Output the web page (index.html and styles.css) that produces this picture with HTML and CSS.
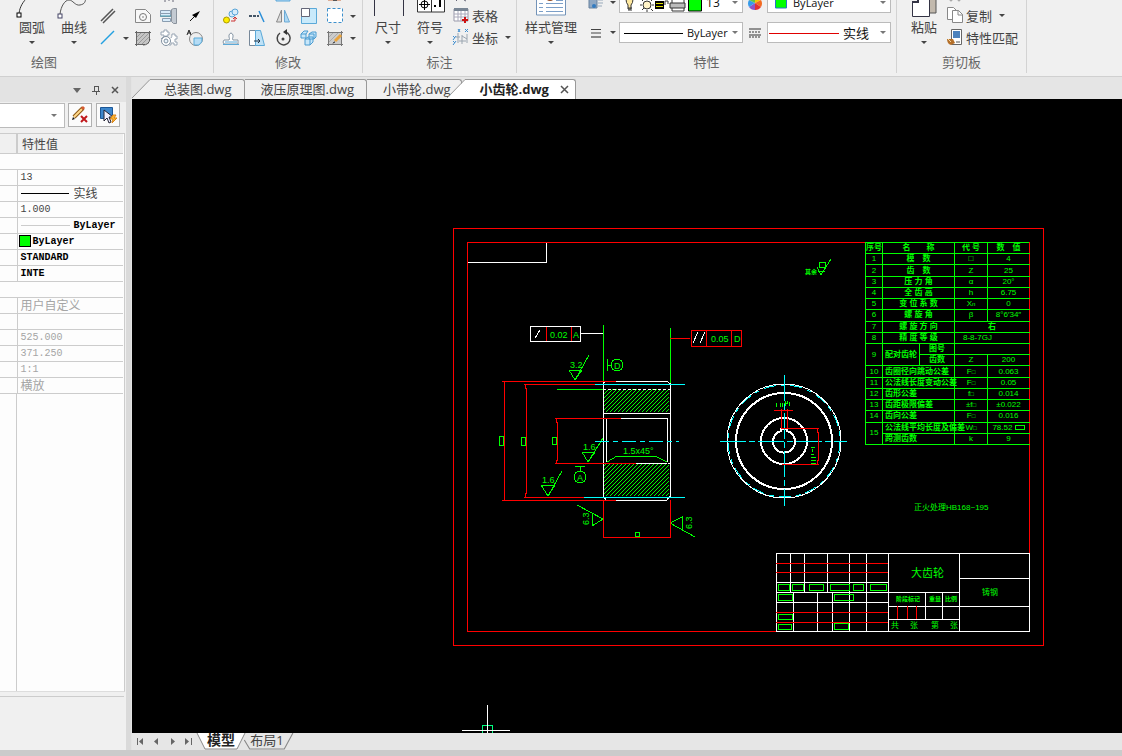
FILE: index.html
```html
<!DOCTYPE html>
<html lang="zh-CN">
<head>
<meta charset="UTF-8">
<title>小齿轮.dwg</title>
<link rel="stylesheet" href="styles.css">
</head>
<body>
<header class="ribbon">
  <section class="group group-draw">
    <div class="tools">
      <button class="big first">
        <svg class="big-icon" width="42" height="20" viewBox="11 0 42 20"><path d="M19 15C19 9 22 3 26 -1" fill="none" stroke="#333" stroke-width="1"/><rect x="17" y="13" width="4" height="4" fill="#fff" stroke="#000"/></svg>
        <span>圆弧</span><i class="arrow"></i>
      </button>
      <button class="big">
        <svg class="big-icon" width="42" height="20" viewBox="53 0 42 20"><path d="M60 14C61 6 65 0 69 0S75 6 80 5S85 2 86 -2" fill="none" stroke="#555"/><rect x="58" y="14" width="4" height="4" fill="#fff" stroke="#446"/></svg>
        <span>曲线</span><i class="arrow"></i>
      </button>
      <div class="grid grid-draw">
        <span></span><span></span><span></span>
        <button class="tool" aria-label="中心线"><svg class="icon" viewBox="0 0 20 20"><path d="M5 17h2M10 16v1M13 17h2" stroke="#667" fill="none"/></svg></button>
        <span></span>
        <button class="tool" aria-label="平行线"><svg class="icon" viewBox="0 0 20 20"><path d="M3 15L15 3M5 17L17 5" stroke="#555" stroke-width="1.5"/></svg></button>
        <span></span>
        <button class="tool" aria-label="局部放大"><svg class="icon" viewBox="0 0 20 20"><path d="M2.500 3.500h10l5 5v8h-15z" fill="#f8f8f8" stroke="#888"/><circle cx="10" cy="11" r="3.500" fill="none" stroke="#777"/><circle cx="10" cy="11" r="1" fill="#aaa"/></svg></button>
        <button class="tool" aria-label="轴"><svg class="icon" viewBox="0 0 20 20"><path d="M1.500 4.500h10v3h-10zM1.500 7.500h10v3h-10zM3.500 12.500h8v3h-8z" fill="#d9ecfa" stroke="#8a9db0"/><path d="M12.500 3.500l2-1h3v15h-3l-2-2z" fill="#c3cad2" stroke="#8a929c"/><path d="M1 10h11" stroke="#49a"/></svg></button>
        <button class="tool" aria-label="箭头"><svg class="icon" viewBox="0 0 20 20"><path d="M5 15L10 10" stroke="#111"/><path d="M15 5L7 9l4 3z" fill="#000"/></svg></button>
        <button class="tool" aria-label="直线"><svg class="icon" viewBox="0 0 20 20"><path d="M3 16L16 3" stroke="#23a0e0" stroke-width="1.500"/></svg></button>
        <i class="arrow"></i>
        <button class="tool" aria-label="剖面线"><svg class="icon" viewBox="0 0 20 20"><path d="M4 5h12v11H4z" fill="#c5c5c5"/><path d="M4 9l4-4M4 13l8-8M5 16L16 5M9 16l7-7" fill="none" stroke="#999"/><path d="M2 4.500h16M2 16.500h10M3.500 3v15M16.500 3v9" stroke="#666"/><path d="M10 17q6 0 7-6" fill="none" stroke="#555"/></svg></button>
        <button class="tool" aria-label="齿形"><svg class="icon" viewBox="0 0 20 20"><path d="M2 4h3V2h3v2h2v3H8v2H5V7H2zM13 6h3v2h2v3h-2v3h2v3h-3v-2h-3v2h-2M2 11q2-3 5-3M12 10q1-1 1-4" fill="#fff" stroke="#98a5b3"/><circle cx="7" cy="13" r="4.500" fill="#fff" stroke="#8090a0"/><circle cx="7" cy="13" r="2" fill="#e8f2fa" stroke="#8090a0"/></svg></button>
        <button class="tool" aria-label="局部视图"><svg class="icon" viewBox="0 0 20 20"><circle cx="11" cy="11" r="6.500" fill="#eee" stroke="#888"/><path d="M9 10h8q1 4-3 7l-5 0z" fill="#b5dcf5" stroke="#5aabda"/><path d="M2 7l2-5 2 5M3 5h3" fill="none" stroke="#222"/></svg></button>
      </div>
    </div>
    <h2>绘图</h2>
  </section>
  <section class="group group-edit">
    <div class="tools">
      <div class="grid grid-edit">
        <span></span><span></span>
        <button class="tool" aria-label="拉伸"><svg class="icon" viewBox="0 0 20 20"><path d="M3 14h14v3H3z" fill="#b5dcf5" stroke="#59a5d8"/></svg></button>
        <span></span>
        <button class="tool" aria-label="删除"><svg class="icon" viewBox="0 0 20 20"><path d="M3 16h13" stroke="#c96a3a"/><path d="M8 16h4v1H8z" fill="#555"/></svg></button>
        <span></span>
        <button class="tool" aria-label="平移复制"><svg class="icon" viewBox="0 0 20 20"><circle cx="11" cy="8" r="3" fill="#d5ebfa" stroke="#59a5d8"/><circle cx="14" cy="6" r="3" fill="#d5ebfa" stroke="#59a5d8"/><circle cx="5.500" cy="14" r="3" fill="#fe0" stroke="#a90"/><path d="M10 15h4v-3M12 13l2-2 2 2" fill="none" stroke="#c33"/></svg></button>
        <button class="tool" aria-label="裁剪"><svg class="icon" viewBox="0 0 20 20"><path d="M2 10h10" stroke="#456" stroke-width="2" stroke-dasharray="3 1"/><path d="M12 5l5 11" stroke="#2b8fd8" stroke-width="1.500"/></svg></button>
        <button class="tool" aria-label="镜像"><svg class="icon" viewBox="0 0 20 20"><path d="M8.500 4v12h-5z" fill="#ddd" stroke="#888"/><path d="M11.500 4v12h5z" fill="#aed8f3" stroke="#6ba9d4"/></svg></button>
        <button class="tool" aria-label="缩放"><svg class="icon" viewBox="0 0 20 20"><path d="M2.500 2.500h15v15h-15z" fill="#c9eafb" stroke="#5ba9d8"/><path d="M2.500 2.500h8v8h-8z" fill="#fff" stroke="#667"/></svg></button>
        <button class="tool" aria-label="选择"><svg class="icon" viewBox="0 0 20 20"><path d="M2.500 2.500h15v14h-15z" fill="#fff" stroke="#3d90cc" stroke-dasharray="3 2"/></svg></button>
        <i class="arrow"></i>
        <button class="tool" aria-label="等距线"><svg class="icon" viewBox="0 0 20 20"><path d="M3 12h5q1-1 0-3V7q2-4 4 0v2q-1 2 0 3h5v4H3q-2-2 0-4" fill="#fff" stroke="#8796a5"/><path d="M2 16.500h16M4 14h12" fill="none" stroke="#5ba9d8"/></svg></button>
        <button class="tool" aria-label="延伸"><svg class="icon" viewBox="0 0 20 20"><path d="M2.500 2.500h6v15h-6z" fill="#fff" stroke="#789"/><path d="M8.500 2.500h5l4 15h-9z" fill="#bfe2f7" stroke="#5ba9d8"/><path d="M7 13h6M11 11l2 2-2 2" fill="none" stroke="#234"/></svg></button>
        <button class="tool" aria-label="旋转"><svg class="icon" viewBox="0 0 20 20"><path d="M7 5a6.500 6.500 0 1 0 5-1" fill="none" stroke="#444" stroke-width="1.500"/><path d="M14 1l-4 3 4 3z" fill="#333"/><circle cx="10" cy="11" r="1.500" fill="#444"/></svg></button>
        <button class="tool" aria-label="阵列"><svg class="icon" viewBox="0 0 20 20"><path d="M2 6l3-3h4l-2 3v4H2zM10 6l3-2h4v5l-2 2h-5zM6 11l3-2h5v5l-3 3H6zM6 11h5v6M2 6h5M10 6h5v5" fill="#c8e7fa" stroke="#4b9bd0"/></svg></button>
        <button class="tool" aria-label="编辑填充"><svg class="icon" viewBox="0 0 20 20"><path d="M3 4h14v12H3z" fill="#ccc"/><path d="M4 9l5-5M4 14L14 4M7 16l9-9" stroke="#aaa"/><path d="M2 4.500h16M2 16.500h16M3.500 3v15M16.500 3v15" stroke="#777"/><path d="M10 13l6-6" stroke="#e8a33d" stroke-width="3"/><path d="M8 15l2-1" stroke="#333"/></svg></button>
        <i class="arrow"></i>
      </div>
    </div>
    <h2>修改</h2>
  </section>
  <section class="group group-dim">
    <div class="tools">
      <button class="big">
        <svg class="big-icon" width="42" height="20" viewBox="368 0 42 20"><path d="M375.500 -1v17M404.500 -1v17" stroke="#334"/></svg>
        <span>尺寸</span><i class="arrow"></i>
      </button>
      <button class="big">
        <svg class="big-icon" width="42" height="20" viewBox="410 0 42 20"><path d="M418.500 -2h27v14h-27zM432.500 -2v14" fill="#fff" stroke="#333"/><circle cx="425.500" cy="4.500" r="3.500" fill="none" stroke="#000"/><path d="M420 4.500h11M425.500 -2v12" stroke="#000"/><path d="M435 5h2v2h-2zM440 0h2v7h-2z"/></svg>
        <span>符号</span><i class="arrow"></i>
      </button>
      <div class="list">
        <button class="row" aria-label="粗糙度"><svg class="icon" viewBox="0 0 20 20"><path d="M5 18l2-2M13 17l2 1" stroke="#667"/></svg></button>
        <button class="row"><svg class="icon" viewBox="0 0 20 20"><path d="M3 4h14v12H3z" fill="#fff" stroke="#99a"/><path d="M3 3h14v3H3z" fill="#788594"/><path d="M3 9h14M3 12h14M7 6v10M10 6v10M14 6v10" stroke="#aab"/><path d="M14 12v6M11 15h6" stroke="#c11" stroke-width="2"/></svg>表格</button>
        <button class="row"><svg class="icon" viewBox="0 0 20 20"><path d="M7 6v10M5 10h4M11 8v9M8 14h7M16 7v9M11 9l5 3" fill="none" stroke="#9aa5b0"/><path d="M7 2l2 3M9 2L7 5M14 2l3 3M17 2l-3 3M2 9l2 2M5 9l-3 4M2 14l2 2M5 14l-3 4" stroke="#3e8ed0"/></svg>坐标<i class="arrow"></i></button>
      </div>
    </div>
    <h2>标注</h2>
  </section>
  <section class="group group-props">
    <div class="tools">
      <button class="big wide">
        <svg class="big-icon" width="60" height="20" viewBox="523 0 60 20"><path d="M538.500 -3h29v18h-29z" fill="#fff" stroke="#7393b8"/><circle cx="552" cy="-3" r="4" fill="#954b21"/><path d="M541 3.500h4M541 7.500h4M541 11.500h4M558 0.500h7M548 3.500h17M548 7.500h17M548 11.500h17" stroke="#7b9fc8"/></svg>
        <span>样式管理</span><i class="arrow"></i>
      </button>
      <div class="props">
        <div class="prop-line">
          <button class="tool small" aria-label="图层"><svg class="icon" viewBox="0 0 20 20"><path d="M3 6h8v9H3z" fill="#8fa8c4" stroke="#68829e"/><circle cx="8" cy="13" r="2" fill="#337bc0"/><path d="M12 7h5M12 10h5M12 13h4" stroke="#9ab"/></svg></button>
          <i class="arrow"></i>
          <label class="combo">
            <svg width="82" height="19" viewBox="622 -8 82 19"><path d="M628 -2a4 4 0 0 1 7 0q0 4-2 6v4h-3v-4q-2-2-2-6" fill="#ffe9a0" stroke="#333"/><path d="M630 7h4M630 9h4" stroke="#333"/><circle cx="649" cy="4" r="4" fill="#fff3c8" stroke="#333"/><path d="M642 4h2M654 4h2M649 -3v2M649 9v2M644 -1l1 1M653 8l2 2M644 9l2-2M653 0l2-2" stroke="#333"/><path d="M657 0h9v8h-9z"/><path d="M658 2.500h7M658 5.500h7" stroke="#dd0"/><path d="M667 4v-4h3v3" stroke="#333" fill="none"/><path d="M674 -2h12v12h-12z" fill="#fff" stroke="#333"/><path d="M672 2h15v5h-15z" fill="#bbb" stroke="#333"/><path d="M690.500 -2h13v12h-13z" fill="#0f0" stroke="#000"/></svg>
            <select class="select-layer" aria-label="图层"><option>13</option></select><i class="arrow light"></i>
          </label>
          <button class="tool small" aria-label="颜色"><svg class="icon" viewBox="0 0 20 20"><path d="M10 10V3a7 7 0 0 1 6 4z" fill="#f7c600"/><path d="M10 10l6-3a7 7 0 0 1 0 7z" fill="#f36b21"/><path d="M10 10l6 4a7 7 0 0 1-6 3z" fill="#e33030"/><path d="M10 10v7a7 7 0 0 1-6-3z" fill="#8c55c8"/><path d="M10 10l-6 4a7 7 0 0 1 0-7z" fill="#379bea"/><path d="M10 10L4 7a7 7 0 0 1 6-4z" fill="#5ec449"/></svg></button>
          <label class="combo">
            <svg width="25" height="19" viewBox="770 -8 25 19"><path d="M777.500 -3h11v10h-11z" fill="#0f0" stroke="#2874c8"/></svg>
            <select class="select-fill" aria-label="颜色"><option>ByLayer</option></select><i class="arrow light"></i>
          </label>
        </div>
        <div class="prop-line">
          <button class="tool small" aria-label="线宽"><svg class="icon" viewBox="0 0 20 20"><path d="M5 6.500h10M5 10h10" stroke="#444"/><path d="M5 14h10" stroke="#222"/></svg></button>
          <i class="arrow"></i>
          <label class="combo">
            <svg width="67" height="19" viewBox="0 0 67 19"><path d="M4 10h59" stroke="#000" shape-rendering="crispEdges"/></svg>
            <select class="select-fill" aria-label="线宽"><option>ByLayer</option></select><i class="arrow light"></i>
          </label>
          <button class="tool small" aria-label="线型"><svg class="icon" viewBox="0 0 20 20"><path d="M4 6h12M4 12h12" stroke="#333"/><path d="M4 9h12M4 14h12" stroke="#333" stroke-dasharray="2 1"/></svg></button>
          <label class="combo">
            <svg width="75" height="19" viewBox="0 0 75 19"><path d="M1 10h70" stroke="#e00000" shape-rendering="crispEdges"/></svg>
            <select class="select-fill select-han" aria-label="线型"><option>实线</option></select><i class="arrow light"></i>
          </label>
        </div>
      </div>
    </div>
    <h2>特性</h2>
  </section>
  <section class="group group-clip">
    <div class="tools">
      <button class="big">
        <svg class="big-icon" width="42" height="20" viewBox="904 0 42 20"><path d="M929 -2h8v15h-8z" fill="#c2b9ad" stroke="#555"/><path d="M913.500 1.500h6v-3h11v18h-17z" fill="#fff" stroke="#334"/><path d="M913 2h6v-3" fill="none" stroke="#334" stroke-width="2"/></svg>
        <span>粘贴</span><i class="arrow"></i>
      </button>
      <div class="list">
        <button class="row" aria-label="剪切"><svg class="icon" viewBox="0 0 20 20"><path d="M4 16q2 4 4 0M12 16q2 4 4 0" fill="none" stroke="#999"/></svg></button>
        <button class="row"><svg class="icon" viewBox="0 0 20 20"><path d="M2.500 2.500h6l3 3v9h-9z" fill="#fff" stroke="#888"/><path d="M7.500 5.500h6l4 4v8h-10z" fill="#fff" stroke="#888"/><path d="M13 5v5h5" fill="none" stroke="#888"/></svg>复制<i class="arrow"></i></button>
        <button class="row"><svg class="icon" viewBox="0 0 20 20"><path d="M6.500 2.500h10v15h-10z" fill="#fff" stroke="#666"/><path d="M8 4h7v7H8z" fill="#4d82bd"/><path d="M11 15h4" stroke="#555"/><path d="M2 12q4 0 6 0l2 4-4 2q-4-1-4-6" fill="#b5702a"/><path d="M3 12l3 3" stroke="#f4d8a0"/></svg>特性匹配</button>
      </div>
    </div>
    <h2>剪切板</h2>
  </section>
</header>

<div class="workspace">
  <aside class="panel">
    <div class="panel-head">
      <button aria-label="选项"><svg width="10" height="10" viewBox="0 0 10 10"><path d="M1 3h8L5 8z" fill="#666"/></svg></button>
      <button aria-label="固定"><svg width="10" height="10" viewBox="0 0 10 10"><path d="M3 1v5M7 1v5M3 1h4M1 6h8M5 6v4" fill="none" stroke="#555" shape-rendering="crispEdges"/></svg></button>
      <button aria-label="关闭"><svg width="10" height="10" viewBox="0 0 10 10"><path d="M2 2l6 6M8 2L2 8" stroke="#555" stroke-width="1.500"/></svg></button>
    </div>
    <div class="panel-tools">
      <label class="pick"><select aria-label="对象"><option></option></select><i class="arrow light"></i></label>
      <button aria-label="取消选择"><svg width="20" height="20" viewBox="0 0 20 20"><path d="M4 12l9-9" stroke="#8a5714" stroke-width="4"/><path d="M4 12l8-8" stroke="#ffd98a" stroke-width="2"/><path d="M12 4l2-2" stroke="#d65a31" stroke-width="3"/><path d="M2 15l1-3 2 2z" fill="#111"/><path d="M11 11l6 6M17 11l-6 6" stroke="#c0181c" stroke-width="2"/></svg></button>
      <button aria-label="快速选择"><svg width="20" height="20" viewBox="0 0 20 20"><path d="M2.500 2.500h12v11h-12z" fill="#3c86cc" stroke="#1c5797"/><path d="M6 5l0 11 3-3 2 5 2-1-2-5h4z" fill="#eef" stroke="#223"/><path d="M15 10l-3 4h3l-1 4 5-5h-3l2-3z" fill="#ffb82e" stroke="#d9851a"/></svg></button>
    </div>
    <div class="sheet">
      <table class="prop-table">
        <thead><tr><th></th><th>特性值</th></tr></thead>
        <tbody>
          <tr class="cat"><td colspan="2"></td></tr>
          <tr><td></td><td>13</td></tr>
          <tr><td></td><td><span class="flexed"><svg width="49" height="10"><path d="M0 5h48" stroke="#000" shape-rendering="crispEdges"/></svg><span class="han">实线</span></span></td></tr>
          <tr><td></td><td>1.000</td></tr>
          <tr class="strong"><td></td><td><span class="flexed"><svg width="49" height="10"><path d="M0 5h49" stroke="#ccc" shape-rendering="crispEdges"/></svg>ByLayer</span></td></tr>
          <tr class="strong"><td></td><td><span class="flexed swatched"><i class="swatch"></i>ByLayer</span></td></tr>
          <tr class="strong"><td></td><td>STANDARD</td></tr>
          <tr class="strong"><td></td><td>INTE</td></tr>
          <tr class="cat"><td colspan="2"></td></tr>
          <tr class="off"><td></td><td><span class="han">用户自定义</span></td></tr>
          <tr class="off"><td></td><td></td></tr>
          <tr class="off"><td></td><td>525.000</td></tr>
          <tr class="off"><td></td><td>371.250</td></tr>
          <tr class="off"><td></td><td>1:1</td></tr>
          <tr class="off"><td></td><td><span class="han">横放</span></td></tr>
        </tbody>
      </table>
      <div class="sheet-rest"></div>
    </div>
    <div class="hint"></div>
  </aside>

  <main class="documents">
    <nav class="tabs">
      <div class="tab tab-first"><svg width="20" height="20" viewBox="0 0 20 20"><path d="M0 20L18 1h2v19z" fill="#f0f0f0"/><path d="M0 19L18 0.500h2" fill="none" stroke="#999"/></svg><button>总装图.dwg</button></div>
      <div class="tab"><button>液压原理图.dwg</button></div>
      <div class="tab tab-last"><button>小带轮.dwg</button></div>
      <div class="tab active"><svg width="20" height="20" viewBox="0 0 20 20"><path d="M0 20L18 1h2v19z" fill="#fff"/><path d="M0 19L18 0.500h2" fill="none" stroke="#999"/></svg><button>小齿轮.dwg</button><button class="close" aria-label="关闭"><svg width="10" height="10" viewBox="0 0 10 10"><path d="M1 1l7 7M8 1L1 8" stroke="#555" stroke-width="1.500"/></svg></button></div>
    </nav>
    <div class="canvas">
      <svg class="drawing" width="990" height="634" viewBox="133 100 990 634">
        <defs>
          <pattern id="hatch" width="4" height="4" patternUnits="userSpaceOnUse"><path d="M-1 5L5 -1M-1 1L1 -1M3 5L5 3" stroke="#00ff00" stroke-width="1"/></pattern>
        </defs>
        <!-- sheet frame -->
        <path class="red" d="M454 229H1044V646H454zM468 243H1030V632H468z"/>
        <path class="white" d="M469 263H547V244"/>

        <!-- half section of the gear -->
        <rect x="604" y="390" width="66" height="23" fill="url(#hatch)"/>
        <rect x="604" y="464" width="66" height="33" fill="url(#hatch)"/>
        <g class="green">
          <path d="M604 326V384M671 329V384M558 390H604"/>
          <path d="M570 371H583L576 381L590 356M570 371L576 381"/>
          <path d="M583 453H596L589 463L604 439M583 453L589 463"/>
          <path d="M542 486H556L549 497L563 472M542 486L549 497"/>
          <path d="M608 463L618 457H656L668 463"/>
          <path d="M608 360V372M608 366H612M576 467H586M581 467V472"/>
          <circle cx="618" cy="366" r="6"/>
          <circle cx="581" cy="478" r="6"/>
          <path d="M578 506L604 520L593 527V514M696 538L671 524L683 518V531"/>
          <path d="M500 437h4v9h-4zM522 438h4v8h-4zM553 438h4v7h-4zM636 533h4v4h-4z"/>
        </g>
        <g class="white">
          <path d="M531 327H581V342H531zM582 334H604M536 339L541 331"/>
          <path d="M694 344L699 333M701 344L706 333"/>
          <path d="M617 382H668M617 501H668M604 414H671M622 419H668M637 464H668"/>
          <path d="M604 384V498M671 384V498M607 419V463M668 419V463"/>
          <path d="M604 384L607 382M668 382L671 385M604 497L607 501M671 497L668 501"/>
          <path d="M604 390H671M604 464H671" stroke-dasharray="3 2"/>
        </g>
        <g class="red">
          <path d="M547 328V342M572 328V342M692 331H742V347H692zM707 331V347M732 331V347M671 339H691"/>
          <path d="M503 382H617M503 501H617M505 382V501"/>
          <path d="M525 385H596M525 498H585M526 385V389H527V494H526V498"/>
          <path d="M556 419H622M556 464H637M557 419V423H558V461H557V464"/>
          <path d="M604 501V539M671 501V539M604 538H671"/>
        </g>
        <path class="cyan" d="M596 385H686M585 498H686"/>
        <path class="cyan" d="M596 442H680" stroke-dasharray="14 4 5 4"/>
        <g class="note">
          <text x="551" y="339">0.02</text><text x="574" y="339">A</text>
          <text x="712" y="343">0.05</text><text x="735" y="343">D</text>
          <text x="571" y="369">3.2</text><text x="584" y="451">1.6</text><text x="543" y="484">1.6</text>
          <text x="615" y="370">D</text><text x="578" y="482">A</text>
          <text x="624" y="455">1.5x45°</text>
          <text transform="translate(590 526) rotate(-90)">6.3</text>
          <text transform="translate(693 530) rotate(-90)">6.3</text>
        </g>

        <!-- end view -->
        <g class="white">
          <circle cx="785" cy="442" r="57"/>
          <circle class="thick" cx="785" cy="442" r="48"/>
          <circle class="thick" cx="785" cy="442" r="23"/>
          <path class="thick" d="M782 432A11 11 0 1 0 788 432V430H782z"/>
        </g>
        <circle class="cyan" cx="785" cy="442" r="56" stroke-dasharray="12 5 5 5"/>
        <path class="cyan" d="M785 376V507M721 442H848" stroke-dasharray="26 3 6 3"/>
        <path class="red" d="M775 411H794M782 410V430M788 410V430M783 429H820M783 465H820M818 429V433H819V461H818V465"/>
        <path class="green" d="M777 404V408M781 404V408M783 404V408M785 404h3M786 402v5M788 402v3M790 403v4M812 448h4M813 453v-3M812 455h3M812 458h5M812 461h5M812 464h5"/>

        <!-- general roughness -->
        <path class="green" d="M820 263h6v5h-6zM818 268L822 276L832 260M819 272H826"/>
        <g class="note tiny"><text x="806" y="275">其余</text></g>
        <g class="note mid"><text x="915" y="511">正火处理HB168~195</text></g>

        <!-- title block -->
        <g class="white">
          <path d="M777 554H1030V632H777zM889 554V632M960 554V632M777 593H960M960 579H1030M889 607H1030M777 583H889M777 603H889M889 620H960"/>
          <path d="M791 554V593M805 554V593M828 554V593M850 554V632M867 554V632M794 593V632M818 593V632M833 593V632M926 593V620M943 593V620"/>
        </g>
        <path class="red" d="M777 564H889M777 573H889M777 613H889M777 623H889M898 607V620M908 607V620M917 607V620"/>
        <path class="green" d="M779 585h11v6h-11zM793 585h11v6h-11zM810 585h14v6h-14zM831 585h19v6h-19zM854 585h10v6h-10zM871 585h16v6h-16zM779 595h14v6h-14zM835 595h19v6h-19zM779 615h14v5h-14zM779 625h13v5h-13zM835 624h14v6h-14z"/>
        <g class="note title"><text x="912" y="578">大齿轮</text></g>
        <g class="note tiny">
          <text x="897" y="602">阶段标记</text><text x="930" y="602">重量</text><text x="946" y="602">比例</text>
        </g>
        <g class="note mid">
          <text x="983" y="596">铸钢</text>
          <text x="892" y="629">共</text><text x="911" y="629">张</text><text x="932" y="629">第</text><text x="951" y="629">张</text>
        </g>

        <!-- cursor -->
        <path d="M483 740V726H493V740" fill="none" stroke="#00ff80"/>
        <path class="white" d="M488 706V734M463 731H511"/>
      </svg>

      <table class="gear-data">
        <colgroup><col class="c-no"><col class="c-name"><col class="c-sub"><col class="c-sym"><col class="c-val"></colgroup>
        <tr><th>序号</th><th colspan="2">名　　称</th><th>代 号</th><th>数　值</th></tr>
        <tr><td>1</td><td colspan="2" class="name">模　数</td><td>□</td><td>4</td></tr>
        <tr><td>2</td><td colspan="2" class="name">齿　数</td><td>Z</td><td>25</td></tr>
        <tr><td>3</td><td colspan="2" class="name">压 力 角</td><td>α</td><td>20°</td></tr>
        <tr><td>4</td><td colspan="2" class="name">全 齿 高</td><td>h</td><td>6.75</td></tr>
        <tr><td>5</td><td colspan="2" class="name">变 位 系 数</td><td>X<sub>n</sub></td><td>0</td></tr>
        <tr><td>6</td><td colspan="2" class="name">螺 旋 角</td><td>β</td><td>8°6′34″</td></tr>
        <tr><td>7</td><td colspan="2" class="name">螺 旋 方 向</td><td colspan="2" class="name">右</td></tr>
        <tr><td>8</td><td colspan="2" class="name">精 度 等 级</td><td colspan="2" class="grade">8-8-7GJ</td></tr>
        <tr><td rowspan="2">9</td><td rowspan="2" class="name">配对齿轮</td><td class="name">图号</td><td colspan="2"></td></tr>
        <tr><td class="name">齿数</td><td>Z</td><td>200</td></tr>
        <tr><td>10</td><td colspan="2" class="name long">齿圈径向跳动公差</td><td>F<sub>□</sub></td><td>0.063</td></tr>
        <tr><td>11</td><td colspan="2" class="name long">公法线长度变动公差</td><td>F<sub>□</sub></td><td>0.05</td></tr>
        <tr><td>12</td><td colspan="2" class="name long">齿形公差</td><td>f<sub>□</sub></td><td>0.014</td></tr>
        <tr><td>13</td><td colspan="2" class="name long">齿距极限偏差</td><td>±f<sub>□</sub></td><td>±0.022</td></tr>
        <tr><td>14</td><td colspan="2" class="name long">齿向公差</td><td>F<sub>□</sub></td><td>0.016</td></tr>
        <tr><td rowspan="2">15</td><td colspan="2" class="name long">公法线平均长度及偏差</td><td>W<sub>□</sub></td><td>78.52 <i class="tol"></i></td></tr>
        <tr><td colspan="2" class="name long">跨测齿数</td><td>k</td><td>9</td></tr>
      </table>
    </div>
    <nav class="layouts">
      <button class="nav" aria-label="第一个"><svg width="9" height="9" viewBox="0 0 9 9"><path d="M1.500 1v7" stroke="#666"/><path d="M7 1v7L3 4.500z" fill="#666"/></svg></button>
      <button class="nav" aria-label="上一个"><svg width="9" height="9" viewBox="0 0 9 9"><path d="M6 1v7L2 4.500z" fill="#666"/></svg></button>
      <button class="nav" aria-label="下一个"><svg width="9" height="9" viewBox="0 0 9 9"><path d="M3 1v7l4-3.500z" fill="#666"/></svg></button>
      <button class="nav" aria-label="最后一个"><svg width="9" height="9" viewBox="0 0 9 9"><path d="M7.500 1v7" stroke="#666"/><path d="M1 1v7l4-3.500z" fill="#666"/></svg></button>
      <button class="sheet-tab on"><svg viewBox="0 0 50 17" preserveAspectRatio="none"><path d="M1 0l8 16h32l8-16" fill="#fff" stroke="#888"/></svg><span>模型</span></button>
      <button class="sheet-tab"><svg viewBox="0 0 50 17" preserveAspectRatio="none"><path d="M4 7l5 9h32l8-16" fill="#e6e6e6" stroke="#888"/></svg><span>布局1</span></button>
    </nav>
  </main>
</div>
<footer class="status"></footer>
</body>
</html>
```
FILE: styles.css
```css
* {
  box-sizing: border-box;
}
body {
  margin: 0;
  height: 100vh;
  display: flex;
  flex-direction: column;
  overflow: hidden;
  background: #f0f0f0;
  color: #444;
  font-family: "Open Sans", "Noto Sans CJK SC", sans-serif;
  font-size: 13px;
}
button {
  padding: 0;
  border: 0;
  background: none;
  color: inherit;
  font: inherit;
}
select {
  appearance: none;
  border: 0;
  padding: 0;
  background: none;
  color: #111;
  font: inherit;
  font-size: 12px;
}
svg {
  display: block;
  flex: none;
}
.arrow {
  display: block;
  flex: none;
  border: 3px solid transparent;
  border-top-color: #444;
  border-bottom: 0;
  justify-self: center;
}
.arrow.light {
  border-top-color: #777;
}

/* ribbon */
.ribbon {
  flex: none;
  display: flex;
  overflow: hidden;
  height: 77px;
  border-bottom: 1px solid #d0d0d0;
}
.group {
  display: flex;
  flex-direction: column;
  border-right: 1px solid #d3d3d3;
  margin-bottom: 3px;
}
.group h2 {
  margin: 0;
  height: 24px;
  line-height: 26px;
  text-align: center;
  font-size: 13px;
  font-weight: normal;
  color: #666;
}
.tools {
  display: flex;
  align-items: flex-end;
  height: 49px;
}
.group-draw .tools {
  padding-left: 11px;
  padding-right: 5px;
}
.group-draw h2 {
  text-align: left;
  padding-left: 31px;
}
.group-edit .tools,
.group-dim .tools {
  padding: 0 5px 0 4px;
}
.group-props .tools {
  padding: 0 5px 0 4px;
}
.group-clip .tools {
  padding: 0 8px 0 6px;
}
.big {
  display: flex;
  flex-direction: column;
  align-items: center;
  width: 42px;
  height: 49px;
}
.big.wide {
  width: 60px;
}
.big span {
  line-height: 14px;
}
.big .arrow {
  margin-top: 7px;
}
.grid {
  display: grid;
  grid-auto-rows: 22px;
  align-items: center;
}
.grid-draw {
  grid-template-columns: 26px 9px 26px 26px 26px;
}
.grid-edit {
  grid-template-columns: repeat(5, 26px) 9px;
}
.tool {
  display: flex;
  justify-content: center;
}
.tool.small {
  width: 24px;
}
.icon {
  width: 20px;
  height: 20px;
}
.list {
  display: flex;
  flex-direction: column;
  padding-bottom: 1px;
}
.row {
  display: flex;
  align-items: center;
  height: 22px;
  gap: 1px;
}
.row .arrow {
  margin-left: 6px;
}
.props {
  display: flex;
  flex-direction: column;
  gap: 9px;
  padding-left: 3px;
  padding-bottom: 6px;
}
.prop-line {
  display: flex;
  align-items: center;
}
.prop-line > .arrow {
  margin: 0 3px 0 2px;
}
.combo {
  display: flex;
  align-items: center;
  width: 124px;
  height: 21px;
  padding-right: 4px;
  border: 1px solid #bbb;
  background: #fff;
}
.select-layer {
  margin-left: 4px;
}
.select-fill {
  flex: 1;
  font-size: 11px;
}
.select-han {
  font-size: 13px;
}
.combo .arrow {
  margin-left: auto;
}

/* property panel */
.workspace {
  flex: 1;
  display: flex;
  min-height: 0;
}
.panel {
  flex: none;
  display: flex;
  flex-direction: column;
  width: 132px;
  padding-right: 5px;
  border-right: 1px solid #e3e3e3;
  background: #f0f0f0;
  box-shadow: inset -5px 0 #dadada;
}
.panel-head {
  flex: none;
  display: flex;
  align-items: center;
  justify-content: flex-end;
  gap: 9px;
  height: 25px;
  padding-right: 6px;
  background: #e3e3e3;
}
.panel-tools {
  flex: none;
  display: flex;
  gap: 3px;
  height: 31px;
  padding: 1px 6px 5px 0;
}
.pick {
  flex: 1;
  display: flex;
  align-items: center;
  padding-right: 7px;
  border: 1px solid #bbb;
  border-left: 0;
  background: #fff;
}
.pick select {
  flex: 1;
  min-width: 0;
}
.panel-tools button {
  display: flex;
  align-items: center;
  justify-content: center;
  width: 24px;
  height: 24px;
  border: 1px solid #b0b0b0;
  background: #fbfbfb;
}
.panel-tools button:last-child {
  margin-left: 1px;
}
.sheet {
  flex: 1;
  display: flex;
  flex-direction: column;
  margin-right: 1px;
  padding-right: 1px;
  border-top: 1px solid #ccc;
  border-right: 1px solid #ccc;
  border-bottom: 1px solid #ddd;
  background: #fdfdfd;
}
.prop-table {
  width: 100%;
  border-collapse: collapse;
  table-layout: fixed;
  font-family: "Liberation Mono", "Noto Sans CJK SC", monospace;
  font-size: 10px;
  line-height: 15px;
}
.prop-table th {
  height: 19px;
  padding: 0 0 0 4px;
  border-bottom: 1px solid #ccc;
  background: #f0f0f0;
  text-align: left;
  font-family: "Noto Sans CJK SC", sans-serif;
  font-size: 12px;
  font-weight: normal;
}
.prop-table th:first-child {
  width: 17px;
  border-right: 2px solid #ccc;
}
.prop-table td {
  height: 16px;
  padding: 0 0 0 3px;
  border-bottom: 1px solid #ccc;
  white-space: nowrap;
}
.prop-table tr:not(.cat) td:first-child {
  border-right: 1px solid #ccc;
}
.han {
  display: block;
  height: 15px;
  line-height: 14px;
  font-family: "Noto Sans CJK SC", sans-serif;
  font-size: 12px;
}
.flexed {
  display: flex;
  align-items: center;
  gap: 4px;
  height: 15px;
}
.flexed.swatched {
  margin-left: -2px;
  gap: 2px;
}
.swatch {
  width: 12px;
  height: 12px;
  border: 1px solid #000;
  background: #00ff00;
}
.strong {
  color: #000;
  font-weight: bold;
}
.off {
  color: #a5a5a5;
}
.sheet-rest {
  flex: 1;
  margin-left: 16px;
  border-left: 1px solid #ccc;
}
.hint {
  flex: none;
  height: 53px;
  margin: 4px 2px 1px 0;
  border-top: 1px solid #ccc;
}

/* documents */
.documents {
  flex: 1;
  min-width: 0;
  display: flex;
  flex-direction: column;
}
.tabs {
  flex: none;
  display: flex;
  align-items: flex-end;
  height: 22px;
  background: #e5e5e5;
}
.tab {
  display: flex;
  height: 20px;
}
.tab > button {
  padding: 0 12px 0 16px;
  border-top: 1px solid #999;
  border-right: 1px solid #999;
  border-radius: 0 3px 0 0;
  background: #f0f0f0;
  line-height: 16px;
}
.tab > button:first-of-type {
  padding-bottom: 2px;
}
.tab-first > button {
  padding-left: 12px;
}
.tab-last > button {
  padding-right: 10px;
}
.tab.active {
  position: relative;
  margin-left: -15px;
}
.tab.active > button {
  padding: 0 11px 2px 13px;
  border-right: 0;
  border-radius: 0;
  background: #fff;
  color: #222;
  font-weight: bold;
}
.tab.active > .close {
  padding: 0 5px 0 0;
  border-right: 1px solid #999;
  border-radius: 0 3px 0 0;
}
.canvas {
  position: relative;
  flex: 1;
  min-height: 0;
  overflow: hidden;
  background: #000;
}
.drawing {
  shape-rendering: crispEdges;
}
.red,
.green,
.white,
.cyan {
  fill: none;
  stroke-width: 1;
}
.red {
  stroke: #ff0000;
}
.green {
  stroke: #00ff00;
}
.white {
  stroke: #ffffff;
}
.cyan {
  stroke: #00ffff;
}
.thick {
  stroke-width: 2;
}
.note {
  fill: #00ff00;
  font-family: "Liberation Sans", "Noto Sans CJK SC", sans-serif;
  font-size: 9px;
}
.note.title {
  font-size: 11px;
}
.note.mid {
  font-size: 8px;
}
.note.tiny {
  font-size: 6px;
  font-weight: bold;
}
.gear-data {
  position: absolute;
  left: 733px;
  top: 143px;
  width: 165px;
  height: 203px;
  border-collapse: collapse;
  table-layout: fixed;
  color: #00ff00;
  font-family: "Liberation Sans", "Noto Sans CJK SC", sans-serif;
  font-size: 8px;
  line-height: 10px;
  text-align: center;
}
.gear-data th,
.gear-data td {
  padding: 0;
  border: 1px solid #00ff00;
  font-weight: normal;
  white-space: nowrap;
}
.gear-data th,
.gear-data .name {
  font-weight: bold;
}
.gear-data tr > :last-child {
  border-right-color: #ff0000;
}
.gear-data sub {
  font-size: 6px;
  line-height: 6px;
  vertical-align: baseline;
}
.gear-data .long {
  padding-left: 2px;
  text-align: left;
}
.gear-data .grade {
  padding-left: 8px;
  text-align: left;
}
.c-no {
  width: 17px;
}
.c-name {
  width: 37px;
}
.c-sub {
  width: 35px;
}
.c-sym {
  width: 33px;
}
.c-val {
  width: 42px;
}
.tol {
  display: inline-block;
  width: 10px;
  height: 5px;
  border: 1px solid #00ff00;
}

/* layout tabs */
.layouts {
  flex: none;
  display: flex;
  height: 17px;
  background: #e6e6e6;
}
.nav {
  display: flex;
  align-items: center;
  justify-content: center;
  width: 16px;
}
.sheet-tab {
  position: relative;
  width: 50px;
  line-height: 12px;
  padding-bottom: 3px;
}
.sheet-tab + .sheet-tab {
  width: 54px;
  margin-left: -6px;
}
.sheet-tab svg {
  position: absolute;
  left: 0;
  top: 0;
  width: 100%;
  height: 17px;
}
.sheet-tab span {
  position: relative;
}
.sheet-tab.on {
  z-index: 1;
  color: #222;
  font-weight: bold;
  font-size: 14px;
}
.status {
  flex: none;
  height: 6px;
  background: #cbcbcb;
}
```
